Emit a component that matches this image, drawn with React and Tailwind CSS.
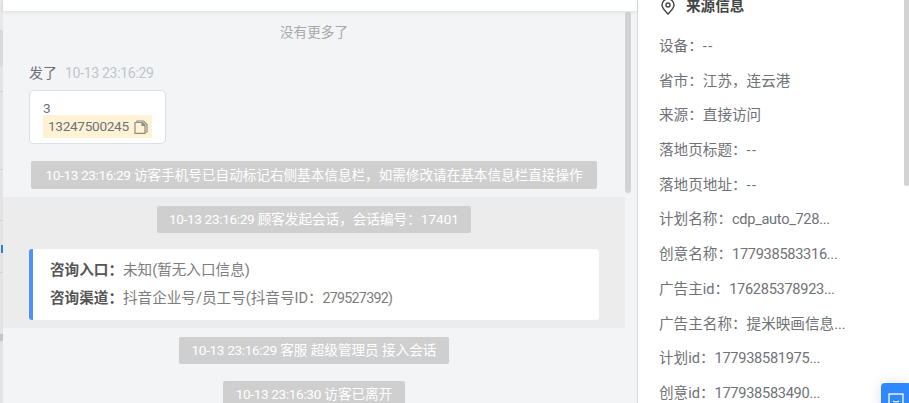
import React from "react";

function Sys({ time, children, className = "", tall = false }) {
  return (
    <div className={"flex justify-center " + className}>
      <div className={(tall ? "h-[28px] leading-[28px] px-[14px] " : "h-[27px] leading-[27px] px-[12.5px] ") + "bg-[#cfcfcf] text-white text-[13.6px] rounded-[2px] whitespace-nowrap"}>
        <span className="tracking-[-0.35px]">{time}</span> {children}
      </div>
    </div>
  );
}

const rows = [
  ["设备：", "--"],
  ["省市：江苏，连云港", ""],
  ["来源：直接访问", ""],
  ["落地页标题：", "--"],
  ["落地页地址：", "--"],
  ["计划名称：", "cdp_auto_728..."],
  ["创意名称：", "177938583316..."],
  ["广告主id：", "176285378923..."],
  ["广告主名称：提米映画信息...", ""],
  ["计划id：", "177938581975..."],
  ["创意id：", "177938583490..."],
];

export default function App() {
  return (
    <div
      className="relative flex w-[909px] h-[403px] overflow-hidden bg-white text-[#6f7277]"
      style={{ fontFamily: 'Roboto,"Noto Sans CJK SC",sans-serif' }}
    >
      <div className="w-[3px] shrink-0 flex flex-col bg-[#e3e3e3]">
        <div className="h-[30px] bg-[#e8e8e8]" />
        <div className="h-[36px] bg-[#d9d9d9]" />
        <div className="h-[26px] border-b border-[#d2d2d2]" />
        <div className="h-[78px] border-b border-[#d2d2d2]" />
        <div className="h-[51px] border-b border-[#d2d2d2]" />
        <div className="h-[24px]" />
        <div className="h-[8px] ml-[1px] bg-[#2f7fd6]" />
        <div className="h-[20px] border-b border-[#d2d2d2]" />
        <div className="h-[61px]" />
        <div className="h-[7px] bg-[#c4c4c4]" />
      </div>
      <div className="w-[634px] shrink-0 flex flex-col bg-[#f3f4f6]">
        <div className="h-[11px] bg-white shadow-[0_1px_4px_rgba(0,0,0,0.1)] shrink-0 relative" />
        <div className="flex flex-1 min-h-0">
          <div className="w-[622px] shrink-0">
            <div className="text-center text-[13.6px] leading-[18px] text-[#a8a8a8] mt-[12px]">没有更多了</div>
            <div className="mt-[23px] ml-[26px] flex items-center h-[18px] leading-[18px]">
              <span className="text-[14px]">发了</span>
              <span className="ml-[8px] text-[14px] tracking-[-0.3px] text-[#c0c4cc]">10-13 23:16:29</span>
            </div>
            <div className="mt-[8px] ml-[26px] w-[137px] h-[54px] bg-white border border-[#dcdfe6] rounded-[5px] pl-[13px] pt-[10px]">
              <div className="text-[13.6px] leading-[14px]">3</div>
              <div className="flex items-center w-[109px] h-[23px] bg-[#fdf3d4] pl-[5px] text-[13.6px] tracking-[-0.3px]">
                13247500245
                <svg className="ml-[5px]" width="14" height="14" viewBox="0 0 14 14" fill="none" stroke="#8b8b8b" strokeWidth="1.2">
                  <path d="M3 2.500V1h6.500L13 4.500V12h-1.500" />
                  <path d="M1 2.500h7.500L11 5v8.400H1z" />
                  <path d="M8 2.500V5.500h3" fill="#8b8b8b" />
                </svg>
              </div>
            </div>
            <Sys tall time="10-13 23:16:29" className="mt-[17px]">访客手机号已自动标记右侧基本信息栏，如需修改请在基本信息栏直接操作</Sys>
            <div className="mt-[8px] h-[131px] bg-[#ececec] pt-[9px]">
              <Sys time="10-13 23:16:29">顾客发起会话，会话编号：17401</Sys>
              <div className="mt-[16px] ml-[26px] w-[570px] h-[71px] bg-white border-l-[4px] border-[#4d90fe] rounded-[3px] pl-[17px] pt-[8px] text-[14.6px] leading-[27.5px]">
                <div className="whitespace-nowrap"><span className="font-bold text-[#555]">咨询入口：</span><span className="text-[#7d7d7d]">未知(暂无入口信息)</span></div>
                <div className="whitespace-nowrap">
                  <span className="font-bold text-[#555]">咨询渠道：</span>
                  <span className="text-[#7d7d7d]">抖音企业号/员工号(抖音号ID：<span className="text-[14.2px] tracking-[-0.7px] -ml-[3px]"> 279527392)</span></span>
                </div>
              </div>
            </div>
            <Sys time="10-13 23:16:29" className="mt-[9px]">客服 超级管理员 接入会话</Sys>
            <Sys time="10-13 23:16:30" className="mt-[17px]">访客已离开</Sys>
          </div>
          <div className="w-[12px] shrink-0">
            <div className="mt-[1px] w-[6px] h-[181px] bg-[#d3d3d3] rounded-[3px]" />
          </div>
        </div>
      </div>
      <div className="flex-1 flex border-l border-[#d9dce1]">
        <div className="flex-1 pl-[21px] text-[14.6px]">
          <div className="flex items-center h-[13px] font-bold text-[#444]">
            <svg className="ml-[2px] mr-[11px]" width="14" height="16" viewBox="0 0 14 16" fill="none" stroke="#444" strokeWidth="1.4">
              <path d="M7 15C4 11.500 1 9 1 6a6 6 0 0 1 12 0c0 3-3 5.500-6 9z" />
              <circle cx="7" cy="6" r="2" />
            </svg>
            <span className="text-[14.6px]">来源信息</span>
          </div>
          <div className="mt-[16px]">
            {rows.map(([label, value]) => (
              <div key={label} className="h-[34.7px] leading-[34.7px] whitespace-nowrap">
                {label}
                <span className={value === "--" ? "tracking-[1.5px]" : "tracking-[-0.3px]"}>{value}</span>
              </div>
            ))}
          </div>
        </div>
        <div className="w-[5px] h-[186px] bg-[#d3d3d3] rounded-b-[2px]" />
      </div>
      <div className="absolute left-[881px] top-[383px] w-[30px] h-[30px] bg-[#2f88ff] rounded-[4px] shadow-[0_0_14px_rgba(0,0,0,0.12)] flex justify-center pt-[10px]">
        <svg width="16" height="16" viewBox="0 0 16 16" fill="none" stroke="white" strokeWidth="1.3">
          <rect x="1" y="1" width="14" height="13" />
          <path d="M5 8c1.500 1 4.500 1 6 0" />
        </svg>
      </div>
    </div>
  );
}
